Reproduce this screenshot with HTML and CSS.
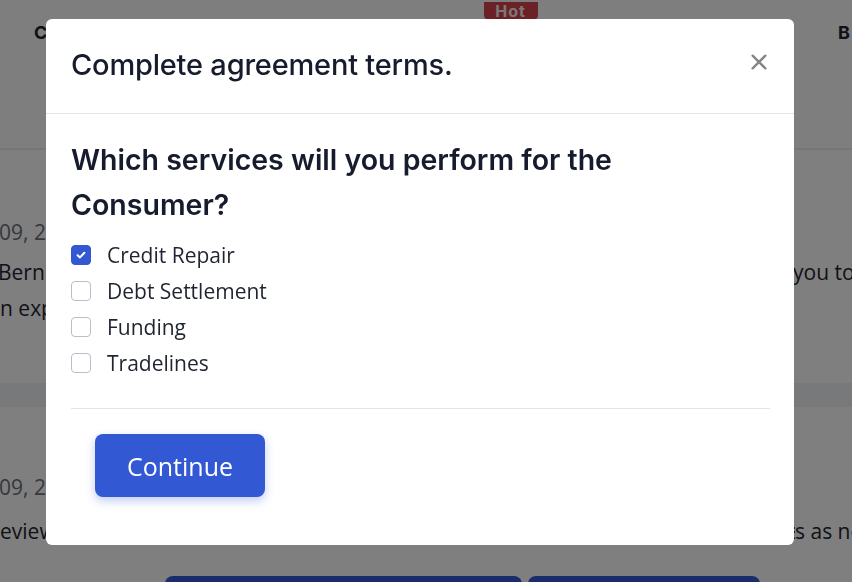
FILE: index.html
```html
<!DOCTYPE html>
<html lang="en">
<head>
<meta charset="utf-8">
<title>Complete agreement terms</title>
<link rel="stylesheet" href="styles.css">
</head>
<body>
<div class="page">
  <header class="topbar">
    <span class="tab tab-left">C</span>
    <span class="tab tab-mid"><span class="hot">Hot</span></span>
    <span class="tab tab-right">B</span>
  </header>
  <section class="card">
    <div class="date">09, 2023</div>
    <p class="line"><span class="lead">Bernie has sent you an agreement. Review the terms below and complete them to allow</span><span class="tail">you to begin</span></p>
    <p class="line"><span class="lead">n expert engagement with the consumer.</span></p>
  </section>
  <section class="card card-2">
    <div class="date">09, 2023</div>
    <p class="line"><span class="lead">eview the agreement terms and select all of the services you perform for this consumer</span><span class="tail">s as needed</span></p>
    <div class="actions">
      <span class="bg-btn wide"></span>
      <span class="bg-btn"></span>
    </div>
  </section>
</div>

<div class="overlay">
  <div class="modal">
    <div class="modal-header">
      <h2 class="modal-title">Complete agreement terms.</h2>
      <button class="close" aria-label="Close">
        <svg width="16" height="16" viewBox="0 0 16 16"><path d="M1.6 1.6L14.4 14.4M14.4 1.6L1.6 14.4" stroke="#858585" stroke-width="2.3" stroke-linecap="round"/></svg>
      </button>
    </div>
    <div class="modal-body">
      <h3 class="question">Which services will you perform for the Consumer?</h3>
      <ul class="options">
        <li class="option"><span class="box checked"><svg width="12" height="12" viewBox="0 0 12 12"><path d="M2.6 6.2L5 8.4L9.4 3.8" fill="none" stroke="#fff" stroke-width="2" stroke-linecap="round" stroke-linejoin="round"/></svg></span>Credit Repair</li>
        <li class="option"><span class="box"></span>Debt Settlement</li>
        <li class="option"><span class="box"></span>Funding</li>
        <li class="option"><span class="box"></span>Tradelines</li>
      </ul>
      <hr class="divider">
      <button class="continue">Continue</button>
    </div>
  </div>
</div>
</body>
</html>
```

FILE: styles.css
```css
* { box-sizing: border-box; }
html, body { margin: 0; padding: 0; }
body {
  width: 852px;
  height: 582px;
  overflow: hidden;
  font-family: "Open Sans", "Noto Sans", sans-serif;
  background: #f1f2f4;
  color: #1f2430;
}
.page { width: 852px; }
.topbar {
  height: 150px;
  background: #fdfdfd;
  border-bottom: 2px solid #eaecef;
  display: flex;
  justify-content: space-between;
  font-family: "Inter", sans-serif;
  font-weight: 700;
  font-size: 18px;
  color: #1f2430;
}
.tab { padding-top: 22px; }
.tab-left { padding-left: 34px; }
.tab-right { width: 14px; overflow: hidden; }
.tab-mid { padding-top: 0; margin-left: 136px; }
.hot {
  display: inline-block;
  background: #d4444c;
  color: #fdeeee;
  font-family: "Inter", sans-serif;
  font-weight: 700;
  font-size: 16px;
  line-height: 19px;
  width: 54px;
  text-align: center;
  border-radius: 0 0 6px 6px;
  letter-spacing: 1px;
}
.card {
  background: #ffffff;
  height: 233px;
  padding-top: 70px;
  margin-bottom: 24px;
}
.card-2 { height: 220px; padding-top: 68px; }
.date { color: #6a7079; font-size: 21px; line-height: 24px; margin-left: -1px; }
.line {
  display: flex;
  margin: 16px 0 0 -2px;
  font-size: 21px;
  line-height: 24px;
  white-space: nowrap;
}
.card .line + .line { margin-top: 12px; margin-left: 0; }
.card-2 .line { margin-top: 20px; margin-left: 0; }
.lead { width: 795px; flex: none; overflow: hidden; }
.tail { flex: none; }
.actions { display: flex; gap: 6px; margin: 33px 0 0 165px; }
.bg-btn { width: 232px; height: 40px; background: #3659d6; border-radius: 8px; }
.bg-btn.wide { width: 357px; }

.overlay {
  position: fixed;
  inset: 0;
  background: rgba(0, 0, 0, 0.5);
  padding-top: 19px;
}
.modal {
  margin-left: 46px;
  width: 748px;
  background: #fff;
  border-radius: 6px;
  overflow: hidden;
}
.modal-header {
  display: flex;
  align-items: center;
  justify-content: space-between;
  height: 95px;
  padding: 0 27px 0 25px;
  border-bottom: 1px solid #e2e4e8;
}
.modal-title {
  margin: 0;
  font-family: "Inter", sans-serif;
  font-weight: 500;
  font-size: 29px;
  letter-spacing: -0.2px;
  color: #161c2d;
  padding-bottom: 4px;
}
.close {
  border: 0;
  background: none;
  padding: 0;
  width: 16px;
  height: 16px;
  display: flex;
  margin-bottom: 8px;
}
.modal-body { padding: 23px 24px 48px 25px; }
.question {
  margin: 0;
  font-family: "Inter", sans-serif;
  font-weight: 600;
  font-size: 28.5px;
  line-height: 45px;
  color: #161c2d;
  width: 600px;
}
.options { list-style: none; margin: 10px 0 0; padding: 0; }
.option {
  display: flex;
  align-items: center;
  height: 36px;
  font-size: 21px;
  color: #1f2430;
}
.box {
  width: 20px;
  height: 20px;
  border: 1px solid #b8bfc9;
  border-radius: 4px;
  margin-right: 16px;
  display: flex;
  align-items: center;
  justify-content: center;
}
.box.checked { background: #3358d4; border-color: #3358d4; }
.divider {
  border: 0;
  border-top: 1px solid #e2e4e8;
  margin: 27px 0 0;
}
.continue {
  margin: 25px 0 0 24px;
  width: 170px;
  height: 63px;
  border: 0;
  border-radius: 8px;
  background: #3358d4;
  color: #fff;
  font-family: "Open Sans", sans-serif;
  font-size: 25px;
  box-shadow: 0 4px 10px rgba(51, 88, 212, 0.3);
}
```
